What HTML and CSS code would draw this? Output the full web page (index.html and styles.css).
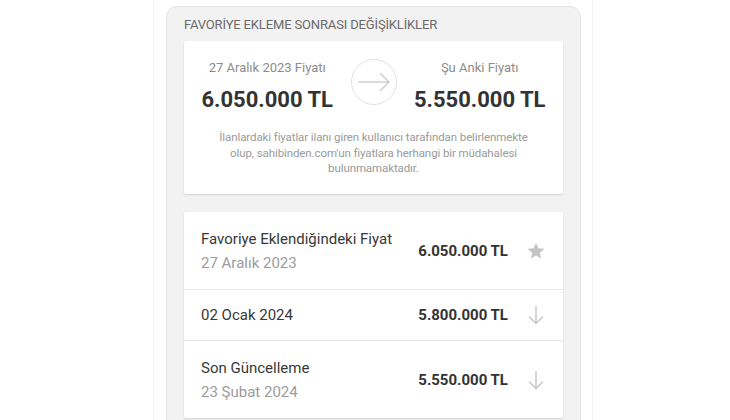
FILE: index.html
```html
<!DOCTYPE html>
<html lang="tr">
<head>
<meta charset="utf-8">
<title>Favoriye Ekleme Sonrası Değişiklikler</title>
<link rel="stylesheet" href="styles.css">
</head>
<body>
<div class="page">
  <section class="panel">
    <h2 class="panel-title">FAVORİYE EKLEME SONRASI DEĞİŞİKLİKLER</h2>
    <div class="card summary">
      <div class="compare">
        <div class="col">
          <div class="label">27 Aralık 2023 Fiyatı</div>
          <div class="big-price">6.050.000 TL</div>
        </div>
        <div class="arrow-circle">
          <svg width="46" height="46" viewBox="0 0 46 46">
            <circle cx="23" cy="23" r="22.5" fill="none" stroke="#e0e0e0" stroke-width="1"/>
            <path d="M8 23H38M29.5 14.5L38 23L29.5 31.5" fill="none" stroke="#cfcfcf" stroke-width="1.5" stroke-linecap="round" stroke-linejoin="round"/>
          </svg>
        </div>
        <div class="col">
          <div class="label">Şu Anki Fiyatı</div>
          <div class="big-price">5.550.000 TL</div>
        </div>
      </div>
      <p class="note">İlanlardaki fiyatlar ilanı giren kullanıcı tarafından belirlenmekte olup, sahibinden.com'un fiyatlara herhangi bir müdahalesi bulunmamaktadır.</p>
    </div>
    <div class="card history">
      <div class="row">
        <div class="row-text">
          <div class="row-title">Favoriye Eklendiğindeki Fiyat</div>
          <div class="row-sub">27 Aralık 2023</div>
        </div>
        <div class="row-price">6.050.000 TL</div>
        <div class="row-icon">
          <svg width="20" height="20" viewBox="0 0 24 24"><path d="M12 17.27L18.18 21l-1.64-7.03L22 9.24l-7.19-.61L12 2 9.19 8.63 2 9.24l5.46 4.73L5.82 21z" fill="#c4c4c4"/></svg>
        </div>
      </div>
      <div class="row single">
        <div class="row-text">
          <div class="row-title">02 Ocak 2024</div>
        </div>
        <div class="row-price">5.800.000 TL</div>
        <div class="row-icon">
          <svg width="20" height="20" viewBox="0 0 20 20"><path d="M10 1.5V18.5M3.5 12L10 18.5L16.5 12" fill="none" stroke="#c8c8c8" stroke-width="1.5" stroke-linecap="round" stroke-linejoin="round"/></svg>
        </div>
      </div>
      <div class="row">
        <div class="row-text">
          <div class="row-title">Son Güncelleme</div>
          <div class="row-sub">23 Şubat 2024</div>
        </div>
        <div class="row-price">5.550.000 TL</div>
        <div class="row-icon">
          <svg width="20" height="20" viewBox="0 0 20 20"><path d="M10 1.5V18.5M3.5 12L10 18.5L16.5 12" fill="none" stroke="#c8c8c8" stroke-width="1.5" stroke-linecap="round" stroke-linejoin="round"/></svg>
        </div>
      </div>
    </div>
  </section>
</div>
</body>
</html>
```
FILE: styles.css
```css
* { box-sizing: border-box; }
html, body {
  margin: 0;
  padding: 0;
  background: #ffffff;
  font-family: Roboto, "Liberation Sans", Arial, sans-serif;
  height: 100%;
  overflow: hidden;
}
.page {
  margin-left: 153px;
  width: 440px;
  min-height: 100%;
  border-left: 1px solid #f1f1f1;
  border-right: 1px solid #f1f1f1;
  padding: 6px 11px 0 12px;
}
.panel {
  background: #f2f2f2;
  border: 1px solid #e4e4e4;
  border-radius: 11px;
  padding: 10px 17px 30px 17px;
  min-height: 500px;
}
.panel-title {
  margin: 0 0 8px 0;
  font-size: 13px;
  line-height: 16px;
  font-weight: 400;
  color: #6a6a6a;
  letter-spacing: -0.15px;
}
.card {
  background: #ffffff;
  box-shadow: 0 1px 2px rgba(0, 0, 0, 0.14);
  border-radius: 2px;
}
.summary {
  padding: 19px 17px 17px 17px;
}
.compare {
  display: grid;
  grid-template-columns: 1fr 46px 1fr;
  column-gap: 17px;
}
.col {
  display: flex;
  flex-direction: column;
  align-items: center;
  gap: 11px;
}
.label {
  font-size: 13px;
  line-height: 16px;
  color: #8c8c8c;
  white-space: nowrap;
}
.big-price {
  font-size: 22px;
  line-height: 26px;
  font-weight: 700;
  color: #333333;
  white-space: nowrap;
}
.arrow-circle {
  align-self: start;
  margin-top: -1px;
  width: 46px;
  height: 46px;
}
.arrow-circle svg { display: block; }
.note {
  margin: 17px 0 0 0;
  text-align: center;
  font-size: 11.5px;
  line-height: 15.5px;
  letter-spacing: -0.1px;
  color: #9a9a9a;
  padding: 0 12px;
}
.history {
  margin-top: 18px;
}
.row {
  display: flex;
  align-items: center;
  padding: 18px 17px 17px 17px;
  border-top: 1px solid #e8e8e8;
}
.row:first-child { border-top: none; }
.row.single {
  padding: 15px 17px 15px 17px;
}
.row-text {
  flex: 1;
  display: flex;
  flex-direction: column;
  gap: 6px;
}
.row-title {
  font-size: 15px;
  line-height: 18px;
  color: #383838;
}
.row-sub {
  font-size: 15px;
  line-height: 18px;
  color: #9c9c9c;
}
.row-price {
  font-size: 15px;
  line-height: 18px;
  font-weight: 700;
  color: #333333;
  white-space: nowrap;
}
.row-icon {
  width: 20px;
  height: 20px;
  margin-left: 18px;
}
.row-icon svg { display: block; }
```
